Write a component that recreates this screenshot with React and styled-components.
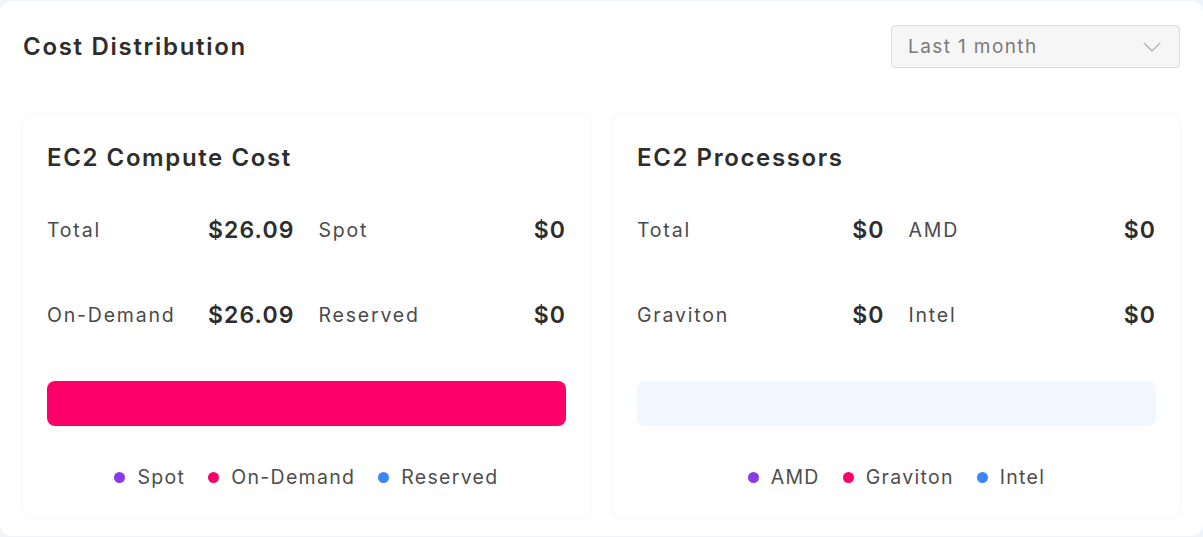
import React, { useState } from "react";
import styled, { createGlobalStyle } from "styled-components";

const GlobalStyle = createGlobalStyle`
  html, body {
    margin: 0;
    padding: 0;
    background: #eef4fa;
    font-family: "Inter", "Noto Sans", sans-serif;
  }
`;

const Panel = styled.section`
  box-sizing: border-box;
  margin-top: 1px;
  width: 1203px;
  height: 535px;
  background: #ffffff;
  border-radius: 12px;
  padding: 24px 23px 0 23px;
`;

const Header = styled.div`
  display: flex;
  align-items: center;
  justify-content: space-between;
  height: 43px;
`;

const Title = styled.h2`
  margin: 0;
  font-size: 24px;
  font-weight: 600;
  letter-spacing: 1.7px;
  color: #2d2d2d;
`;

const Select = styled.button`
  box-sizing: border-box;
  width: 289px;
  height: 43px;
  display: flex;
  align-items: center;
  justify-content: space-between;
  padding: 0 18px 0 16px;
  background: #f6f6f6;
  border: 1px solid #dcdcdc;
  border-radius: 4px;
  font-family: inherit;
  font-size: 19px;
  letter-spacing: 1.4px;
  color: #7a7a7a;
  cursor: pointer;
`;

const Cards = styled.div`
  display: grid;
  grid-template-columns: 1fr 1fr;
  gap: 23px;
  margin-top: 46px;
`;

const Card = styled.div`
  box-sizing: border-box;
  height: 404px;
  background: #ffffff;
  border-radius: 10px;
  box-shadow: 0 0 4px rgba(0, 0, 0, 0.06);
  padding: 30px 24px 0 24px;
`;

const CardTitle = styled.h3`
  margin: 0;
  height: 28px;
  line-height: 28px;
  font-size: 24px;
  font-weight: 600;
  letter-spacing: 1.6px;
  color: #2d2d2d;
`;

const Stats = styled.div`
  display: grid;
  grid-template-columns: 1fr 1fr;
  column-gap: 24px;
  row-gap: 55px;
  margin-top: 43px;
`;

const Stat = styled.div`
  display: flex;
  align-items: center;
  justify-content: space-between;
  height: 30px;
`;

const Label = styled.span`
  font-size: 19.5px;
  letter-spacing: 1.8px;
  color: #4a4a4a;
`;

const Value = styled.span`
  font-size: 23px;
  font-weight: 600;
  letter-spacing: 1.1px;
  color: #2d2d2d;
`;

const Bar = styled.div`
  height: 45px;
  margin-top: 51px;
  border-radius: 8px;
  background: ${(p) => (p.$filled ? "#ff006b" : "#f0f7fe")};
`;

const Legend = styled.div`
  display: flex;
  justify-content: center;
  gap: 23px;
  margin-top: 39px;
  height: 24px;
`;

const LegendItem = styled.div`
  display: flex;
  align-items: center;
  gap: 12px;
  font-size: 19.5px;
  letter-spacing: 1.3px;
  color: #4d4d4d;
`;

const Dot = styled.span`
  width: 11px;
  height: 11px;
  border-radius: 50%;
  background: ${(p) => p.$color};
`;

const PURPLE = "#8a3ae8";
const PINK = "#ff006b";
const BLUE = "#3b87f5";

const CostCard = ({ title, stats, legend, filled }) => (
  <Card>
    <CardTitle>{title}</CardTitle>
    <Stats>
      {stats.map(([label, value]) => (
        <Stat key={label}>
          <Label>{label}</Label>
          <Value>{value}</Value>
        </Stat>
      ))}
    </Stats>
    <Bar $filled={filled} />
    <Legend>
      {legend.map(([name, color]) => (
        <LegendItem key={name}>
          <Dot $color={color} />
          {name}
        </LegendItem>
      ))}
    </Legend>
  </Card>
);

export default function App() {
  const [range] = useState("Last 1 month");

  return (
    <>
      <GlobalStyle />
      <Panel>
        <Header>
          <Title>Cost Distribution</Title>
          <Select>
            {range}
            <svg width="18" height="10" viewBox="0 0 18 10" fill="none">
              <path d="M1 1l8 8 8-8" stroke="#b5b5b5" strokeWidth="1.4" />
            </svg>
          </Select>
        </Header>
        <Cards>
          <CostCard
            title="EC2 Compute Cost"
            filled
            stats={[
              ["Total", "$26.09"],
              ["Spot", "$0"],
              ["On-Demand", "$26.09"],
              ["Reserved", "$0"],
            ]}
            legend={[
              ["Spot", PURPLE],
              ["On-Demand", PINK],
              ["Reserved", BLUE],
            ]}
          />
          <CostCard
            title="EC2 Processors"
            stats={[
              ["Total", "$0"],
              ["AMD", "$0"],
              ["Graviton", "$0"],
              ["Intel", "$0"],
            ]}
            legend={[
              ["AMD", PURPLE],
              ["Graviton", PINK],
              ["Intel", BLUE],
            ]}
          />
        </Cards>
      </Panel>
    </>
  );
}
